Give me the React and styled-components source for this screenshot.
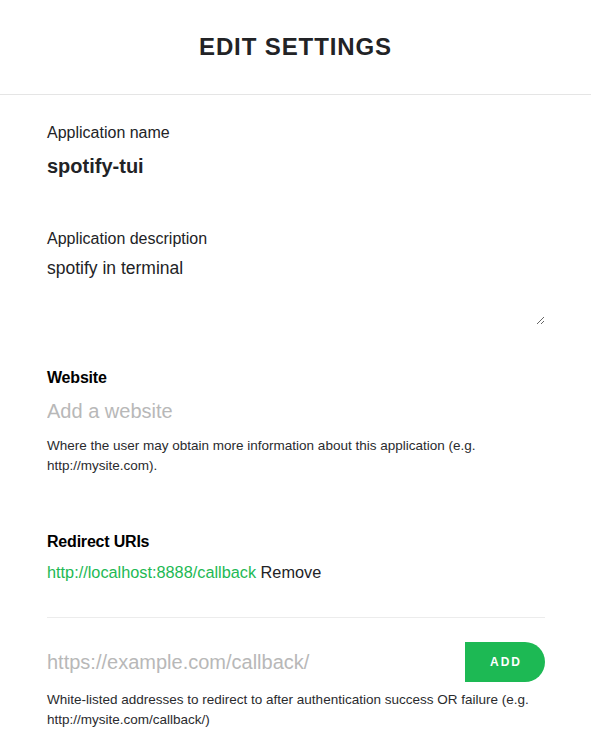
import React from 'react'
import styled, { createGlobalStyle } from 'styled-components'

const GlobalStyle = createGlobalStyle`
    html, body {
        margin: 0;
        padding: 0;
        background: #ffffff;
    }
    body {
        font-family: "Liberation Sans", Arial, sans-serif;
        color: #222326;
    }
`

const Page = styled.div`
    width: 591px;
    min-height: 756px;
    background: #fff;
`

const Header = styled.header`
    height: 94px;
    display: flex;
    align-items: center;
    justify-content: center;
    border-bottom: 1px solid #e5e5e5;
`

const Title = styled.h1`
    margin: 0;
    font-size: 24px;
    line-height: 28px;
    font-weight: 700;
    letter-spacing: 0.9px;
    color: #222326;
    text-transform: uppercase;
`

const Form = styled.form`
    padding: 0 46px 0 47px;
    display: flex;
    flex-direction: column;
`

const Field = styled.div`
    display: flex;
    flex-direction: column;
    margin-top: ${p => p.$top}px;
`

const Label = styled.label`
    font-size: 16px;
    line-height: 20px;
    font-weight: ${p => (p.$bold ? 700 : 400)};
    color: ${p => (p.$bold ? '#000' : '#222326')};
    letter-spacing: ${p => (p.$bold ? '-0.2px' : '0')};
`

// bare inputs, the page draws no borders round them
const TextInput = styled.input`
    display: block;
    width: 100%;
    box-sizing: border-box;
    margin: 0;
    margin-top: ${p => p.$top || 0}px;
    padding: 0;
    border: none;
    outline: none;
    background: transparent;
    font-family: inherit;
    font-size: 20px;
    height: ${p => p.$height || 24}px;
    font-weight: ${p => (p.$bold ? 700 : 400)};
    color: #222326;

    &::placeholder {
        color: #b8b8b8;
        opacity: 1;
    }
`

const DescArea = styled.textarea`
    display: block;
    width: 100%;
    box-sizing: border-box;
    margin: 9px 0 0 0;
    padding: 0;
    height: 67px;
    border: none;
    outline: none;
    background: transparent;
    font-family: inherit;
    font-size: 17.5px;
    line-height: 20px;
    color: #222326;
    resize: vertical;
`

const Help = styled.p`
    margin: ${p => p.$top}px 0 0 0;
    font-size: 13.5px;
    line-height: 20px;
    color: #2a2b2e;
`

const UriRow = styled.div`
    margin-top: 10px;
    font-size: 16.3px;
    line-height: 20px;
    color: #222326;
`

const UriLink = styled.a`
    color: #1db954;
    text-decoration: none;
`

const RemoveLink = styled.a`
    color: #222326;
    cursor: pointer;
`

const Divider = styled.hr`
    margin: 35px 0 0 0;
    border: none;
    border-top: 1px solid #ececec;
    height: 0;
`

const AddRow = styled.div`
    margin-top: 24px;
    display: flex;
    align-items: center;
`

const AddButton = styled.button`
    flex: 0 0 80px;
    height: 40px;
    border: none;
    border-radius: 0 20px 20px 0;
    background: #1db954;
    color: #fff;
    font-family: inherit;
    font-size: 12px;
    font-weight: 700;
    letter-spacing: 2px;
    padding: 0 0 0 2px;
    cursor: pointer;
`

const App = () => {
    return (
        <Page>
            <GlobalStyle />
            <Header>
                <Title>Edit Settings</Title>
            </Header>
            <Form onSubmit={e => e.preventDefault()}>
                <Field $top={28}>
                    <Label>Application name</Label>
                    <TextInput $top={11} $bold defaultValue="spotify-tui" />
                </Field>

                <Field $top={51}>
                    <Label>Application description</Label>
                    <DescArea defaultValue="spotify in terminal" />
                </Field>

                <Field $top={43}>
                    <Label $bold>Website</Label>
                    <TextInput $top={11} placeholder="Add a website" />
                    <Help $top={13}>
                        Where the user may obtain more information about this application (e.g. http://mysite.com).
                    </Help>
                </Field>

                <Field $top={56}>
                    <Label $bold>Redirect URIs</Label>
                    <UriRow>
                        <UriLink>http://localhost:8888/callback</UriLink> <RemoveLink>Remove</RemoveLink>
                    </UriRow>
                    <Divider />
                    <AddRow>
                        <TextInput $height={40} placeholder="https://example.com/callback/" />
                        <AddButton type="button">ADD</AddButton>
                    </AddRow>
                    <Help $top={7.5}>
                        White-listed addresses to redirect to after authentication success OR failure (e.g. http://mysite.com/callback/)
                    </Help>
                </Field>
            </Form>
        </Page>
    )
}

export default App
